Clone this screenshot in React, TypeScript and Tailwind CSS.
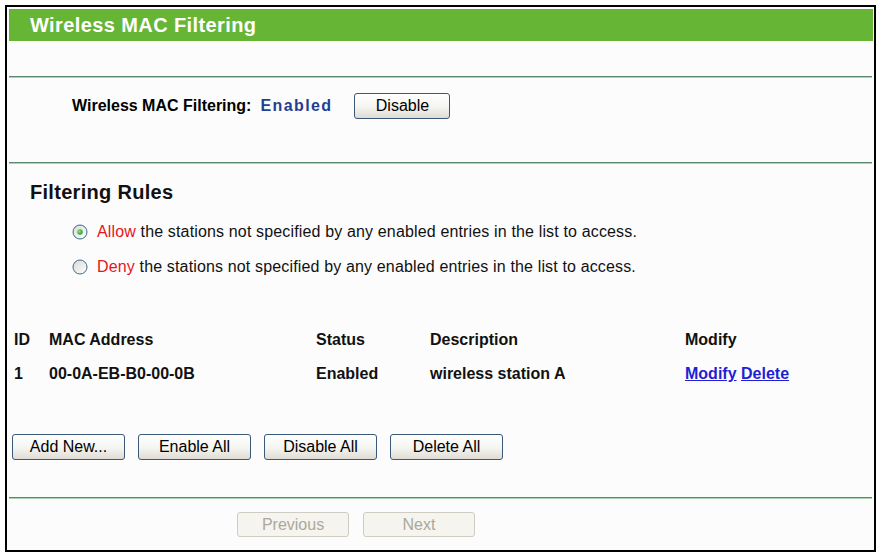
import React from "react";

const font = { fontFamily: '"Liberation Sans", Arial, sans-serif' };

function Radio({ checked }: { checked?: boolean }) {
  return (
    <svg width="16" height="16" viewBox="0 0 16 16" className="shrink-0">
      <defs>
        <linearGradient id="rfill" x1="0" y1="0" x2="1" y2="1">
          <stop offset="0" stopColor="#d8d8d2" />
          <stop offset="1" stopColor="#ffffff" />
        </linearGradient>
        <radialGradient id="rdot" cx="0.4" cy="0.4" r="0.6">
          <stop offset="0" stopColor="#8ee08e" />
          <stop offset="1" stopColor="#21a121" />
        </radialGradient>
      </defs>
      <circle cx="8" cy="8" r="7" fill="url(#rfill)" stroke="#3d6a8e" strokeWidth="1" />
      {checked && <circle cx="8" cy="8" r="2.7" fill="url(#rdot)" />}
    </svg>
  );
}

function Btn({ children, w, disabled }: { children: React.ReactNode; w: string; disabled?: boolean }) {
  if (disabled) {
    return (
      <div
        className={`${w} h-[25px] flex items-center justify-center rounded-[3px] border border-[#cfcdc2] bg-[#f5f4ef] text-[16px] text-[#aca899]`}
      >
        {children}
      </div>
    );
  }
  return (
    <div
      className={`${w} h-[26px] flex items-center justify-center rounded-[3px] border border-[#3a5878] bg-[linear-gradient(#ffffff,#f4f4f0_55%,#dedcd4)] text-[16px] text-black`}
    >
      {children}
    </div>
  );
}

function Line() {
  return (
    <div className="flex flex-col">
      <div className="h-[1px] bg-[#5a8a6c]" />
      <div className="h-[1px] bg-[#a9d3b3]" />
    </div>
  );
}

export default function App() {
  return (
    <div className="w-[878px] h-[556px] bg-white pt-[5px] pl-[5px]" style={font}>
      <div className="w-[871px] h-[547px] border-2 border-black bg-[#fcfcfc] flex flex-col">
        <div className="pt-[2px] pl-[2px] pr-[1px]">
          <div className="h-[32px] bg-[#66b535] flex items-center pl-[21px] text-[20px] font-bold text-white tracking-[0.4px]">
            Wireless MAC Filtering
          </div>
        </div>

        <div className="mt-[35px] mx-[2px]">
          <Line />
        </div>

        <div className="mt-[15px] h-[26px] flex items-center pl-[65px]">
          <span className="text-[16px] font-bold text-black">Wireless MAC Filtering:</span>
          <span className="ml-[9px] text-[16px] font-bold text-[#1f3f92] tracking-[1.4px]">Enabled</span>
          <div className="ml-[22px]">
            <Btn w="w-[96px]">Disable</Btn>
          </div>
        </div>

        <div className="mt-[43px] mx-[2px]">
          <Line />
        </div>

        <div className="mt-[18px] h-[20px] leading-[20px] pl-[23px] text-[20px] font-bold text-[#111] tracking-[0.3px]">
          Filtering Rules
        </div>

        <div className="mt-[20px] h-[20px] flex items-center pl-[65px] text-[16px] text-[#111] tracking-[0.15px]">
          <Radio checked />
          <span className="ml-[9px] text-[#e8141c]">Allow</span>
          <span>&nbsp;the stations not specified by any enabled entries in the list to access.</span>
        </div>
        <div className="mt-[15px] h-[20px] flex items-center pl-[65px] text-[16px] text-[#111] tracking-[0.15px]">
          <Radio />
          <span className="ml-[9px] text-[#e8141c]">Deny</span>
          <span>&nbsp;the stations not specified by any enabled entries in the list to access.</span>
        </div>

        <div className="mt-[51px] h-[20px] grid grid-cols-[35px_267px_114px_255px_1fr] items-center pl-[7px] text-[16px] font-bold text-[#111]">
          <span>ID</span>
          <span>MAC Address</span>
          <span>Status</span>
          <span>Description</span>
          <span>Modify</span>
        </div>
        <div className="mt-[14px] h-[20px] grid grid-cols-[35px_267px_114px_255px_1fr] items-center pl-[7px] text-[16px] font-bold text-[#111]">
          <span>1</span>
          <span>00-0A-EB-B0-00-0B</span>
          <span>Enabled</span>
          <span>wireless station A</span>
          <span className="text-[#1f1fd6]">
            <span className="underline">Modify</span> <span className="underline">Delete</span>
          </span>
        </div>

        <div className="mt-[52px] flex gap-[13px] pl-[5px]">
          <Btn w="w-[113px]">Add New...</Btn>
          <Btn w="w-[113px]">Enable All</Btn>
          <Btn w="w-[113px]">Disable All</Btn>
          <Btn w="w-[113px]">Delete All</Btn>
        </div>

        <div className="mt-[37px] mx-[2px]">
          <Line />
        </div>

        <div className="mt-[13px] flex gap-[14px] pl-[230px]">
          <Btn w="w-[112px]" disabled>Previous</Btn>
          <Btn w="w-[112px]" disabled>Next</Btn>
        </div>
      </div>
    </div>
  );
}
